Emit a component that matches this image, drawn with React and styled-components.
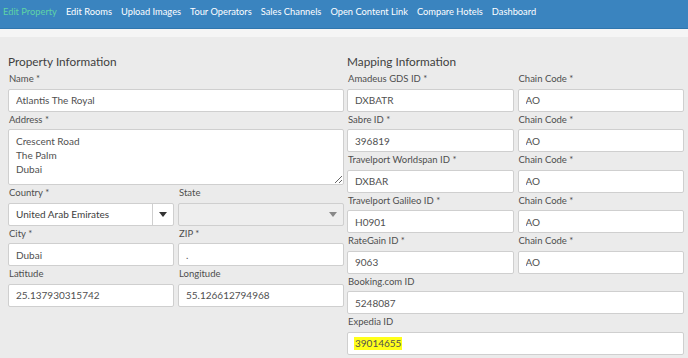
import React from "react";
import styled, { createGlobalStyle } from "styled-components";

const Global = createGlobalStyle`
  html, body { margin: 0; padding: 0; background: #ebebeb; }
  body { font-family: "Lato", "Open Sans", sans-serif; color: #4a4a4a; }
  * { box-sizing: border-box; }
`;

const Nav = styled.nav`
  height: 29px;
  background: #3a84bf;
  border-bottom: 1px solid #2f76ae;
  display: flex;
  align-items: center;
  gap: 9px;
  padding: 0 0 5px 3px;
`;

const NavItem = styled.a`
  font-size: 9.3px;
  color: ${p => (p.$active ? "#5fd3a6" : "#ffffff")};
  text-decoration: none;
  white-space: nowrap;
`;

const Strip = styled.div`
  height: 8px;
  background: #f5f5f5;
`;

const Columns = styled.div`
  display: grid;
  grid-template-columns: 336px 337px;
  gap: 3px;
  padding: 16px 4px 0 8px;
`;

const Column = styled.section`
  display: flex;
  flex-direction: column;
`;

const Heading = styled.h2`
  margin: 0 0 1px;
  font-size: 11.8px;
  font-weight: 400;
  line-height: 17px;
  color: #3f3f3f;
`;

const Row = styled.div`
  display: grid;
  grid-template-columns: ${p => (p.$split ? "1fr 1fr" : "1fr")};
  gap: 4px;
`;

const Field = styled.div`
  display: flex;
  flex-direction: column;
`;

const Label = styled.label`
  font-size: 9.5px;
  line-height: 16px;
  height: 17.5px;
  color: #4e4e4e;
  padding-left: 1px;
`;

const Input = styled.input`
  height: 23px;
  width: 100%;
  border: 1px solid #cfcfcf;
  border-radius: 2px;
  background: #fff;
  padding: 0 7px;
  font-family: inherit;
  font-size: 10px;
  color: #505050;
  outline: none;
`;

const FakeInput = styled.div`
  height: 23px;
  border: 1px solid #cfcfcf;
  border-radius: 2px;
  background: #fff;
  padding: 0 6px;
  font-size: 10px;
  display: flex;
  align-items: center;
  color: #505050;
`;

const Mark = styled.span`
  background: #ffff1a;
  padding: 0 1px;
  line-height: 13px;
`;

const TextArea = styled.textarea`
  height: 56px;
  width: 100%;
  border: 1px solid #cfcfcf;
  border-radius: 2px;
  background: #fff;
  padding: 4px 7px;
  font-family: inherit;
  font-size: 10px;
  line-height: 14px;
  color: #505050;
  resize: vertical;
  outline: none;
  display: block;
  margin: 0;
`;

const Select = styled.div`
  height: 23px;
  display: flex;
  border: 1px solid #cfcfcf;
  border-radius: 2px;
  background: ${p => (p.$disabled ? "#eeeeee" : "#fff")};
  font-size: 10px;
  color: #404040;
`;

const SelectText = styled.div`
  flex: 1;
  display: flex;
  align-items: center;
  padding: 0 7px;
`;

const Arrow = styled.div`
  width: 21px;
  display: flex;
  align-items: center;
  justify-content: center;
  border-left: 1px solid ${p => (p.$disabled ? "transparent" : "#cfcfcf")};
  &::after {
    content: "";
    border-left: 4px solid transparent;
    border-right: 4px solid transparent;
    border-top: 5px solid ${p => (p.$disabled ? "#888" : "#333")};
  }
`;

const navItems = [
  "Edit Property",
  "Edit Rooms",
  "Upload Images",
  "Tour Operators",
  "Sales Channels",
  "Open Content Link",
  "Compare Hotels",
  "Dashboard",
];

const TextField = ({ label, value }) => (
  <Field>
    <Label>{label}</Label>
    <Input readOnly value={value} />
  </Field>
);

const SelectField = ({ label, value, disabled }) => (
  <Field>
    <Label>{label}</Label>
    <Select $disabled={disabled}>
      <SelectText>{value}</SelectText>
      <Arrow $disabled={disabled} />
    </Select>
  </Field>
);

const mapping = [
  ["Amadeus GDS ID *", "DXBATR"],
  ["Sabre ID *", "396819"],
  ["Travelport Worldspan ID *", "DXBAR"],
  ["Travelport Galileo ID *", "H0901"],
  ["RateGain ID *", "9063"],
];

export default function App() {
  return (
    <>
      <Global />
      <Nav>
        {navItems.map((n, i) => (
          <NavItem key={n} $active={i === 0}>
            {n}
          </NavItem>
        ))}
      </Nav>
      <Strip />
      <Columns>
        <Column>
          <Heading>Property Information</Heading>
          <TextField label="Name *" value="Atlantis The Royal" />
          <Field>
            <Label>Address *</Label>
            <TextArea readOnly value={"Crescent Road\nThe Palm\nDubai"} />
          </Field>
          <Row $split>
            <SelectField label="Country *" value="United Arab Emirates" />
            <SelectField label="State" value="" disabled />
          </Row>
          <Row $split>
            <TextField label="City *" value="Dubai" />
            <TextField label="ZIP *" value="." />
          </Row>
          <Row $split>
            <TextField label="Latitude" value="25.137930315742" />
            <TextField label="Longitude" value="55.126612794968" />
          </Row>
        </Column>
        <Column>
          <Heading>Mapping Information</Heading>
          {mapping.map(([l, v]) => (
            <Row $split key={l}>
              <TextField label={l} value={v} />
              <TextField label="Chain Code *" value="AO" />
            </Row>
          ))}
          <TextField label="Booking.com ID" value="5248087" />
          <Field>
            <Label>Expedia ID</Label>
            <FakeInput>
              <Mark>39014655</Mark>
            </FakeInput>
          </Field>
        </Column>
      </Columns>
    </>
  );
}
